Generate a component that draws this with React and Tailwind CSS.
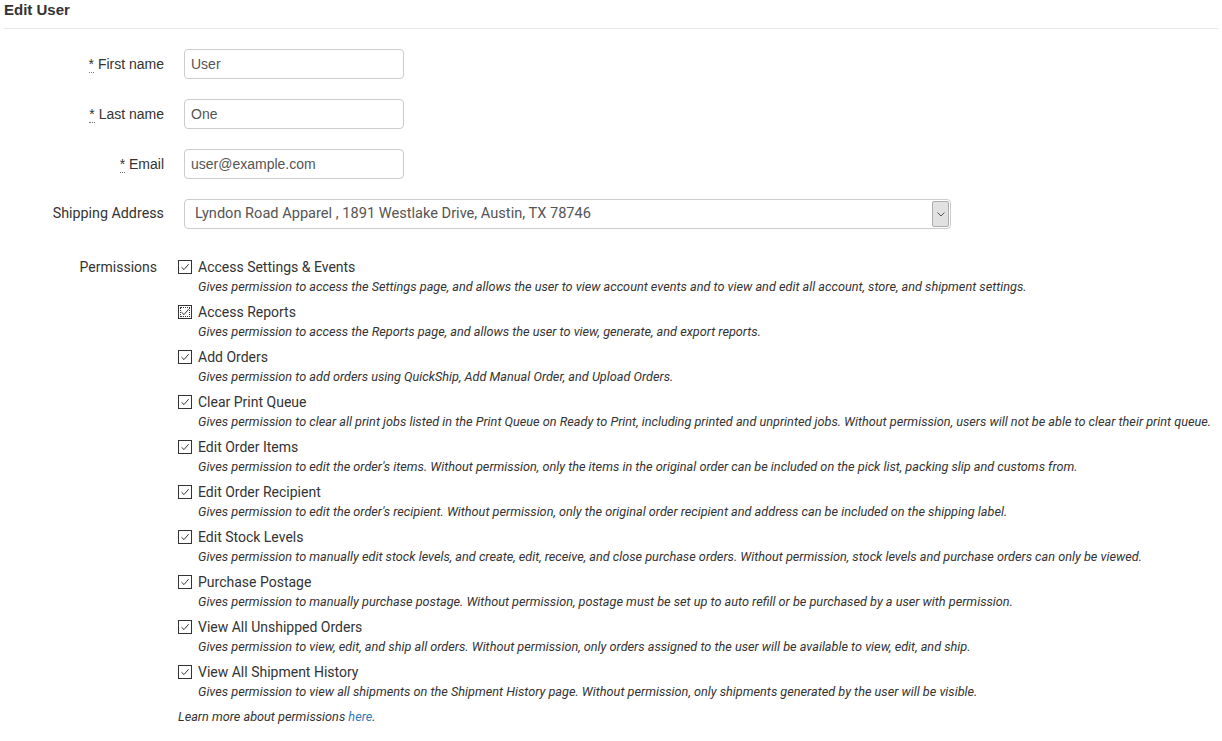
import React from 'react';

const permissions = [
  {
    name: 'Access Settings & Events',
    desc: 'Gives permission to access the Settings page, and allows the user to view account events and to view and edit all account, store, and shipment settings.',
  },
  {
    name: 'Access Reports',
    desc: 'Gives permission to access the Reports page, and allows the user to view, generate, and export reports.',
    focused: true,
  },
  {
    name: 'Add Orders',
    desc: 'Gives permission to add orders using QuickShip, Add Manual Order, and Upload Orders.',
  },
  {
    name: 'Clear Print Queue',
    desc: 'Gives permission to clear all print jobs listed in the Print Queue on Ready to Print, including printed and unprinted jobs. Without permission, users will not be able to clear their print queue.',
  },
  {
    name: 'Edit Order Items',
    desc: "Gives permission to edit the order's items. Without permission, only the items in the original order can be included on the pick list, packing slip and customs from.",
  },
  {
    name: 'Edit Order Recipient',
    desc: "Gives permission to edit the order's recipient. Without permission, only the original order recipient and address can be included on the shipping label.",
  },
  {
    name: 'Edit Stock Levels',
    desc: 'Gives permission to manually edit stock levels, and create, edit, receive, and close purchase orders. Without permission, stock levels and purchase orders can only be viewed.',
  },
  {
    name: 'Purchase Postage',
    desc: 'Gives permission to manually purchase postage. Without permission, postage must be set up to auto refill or be purchased by a user with permission.',
  },
  {
    name: 'View All Unshipped Orders',
    desc: 'Gives permission to view, edit, and ship all orders. Without permission, only orders assigned to the user will be available to view, edit, and ship.',
  },
  {
    name: 'View All Shipment History',
    desc: 'Gives permission to view all shipments on the Shipment History page. Without permission, only shipments generated by the user will be visible.',
  },
];

const arial = "font-['Liberation_Sans',Arial,sans-serif]";
const roboto = "font-['Roboto','Liberation_Sans',sans-serif]";

const TextRow = ({ label, value }) => (
  <div className="flex items-center mb-5">
    <label className={`w-[164px] text-right text-sm text-[#333] ${arial}`}>
      <abbr className="no-underline border-b border-dotted border-[#777] leading-[11px] cursor-help" title="required">*</abbr> {label}
    </label>
    <input
      type="text"
      defaultValue={value}
      className={`ml-5 w-[220px] h-[30px] px-[6px] border border-[#ccc] rounded-[4px] text-sm text-[#555] outline-none ${arial}`}
    />
  </div>
);

const CheckBox = ({ focused }) => (
  <span
    className={`flex items-center justify-center w-[14px] h-[14px] shrink-0 border border-[#333] bg-white ${
      focused ? 'outline outline-1 outline-dotted outline-[#333] outline-offset-[-3px]' : ''
    }`}
  >
    <svg width="10" height="10" viewBox="0 0 10 10" fill="none">
      <path d="M1.5 5.2 L4 7.6 L8.6 2.2" stroke="#333" strokeWidth="1" />
    </svg>
  </span>
);

export default function App() {
  return (
    <div className={`bg-white min-h-screen ${roboto} text-[#333]`}>
      <h2 className={`mx-1 text-[15px] font-bold leading-5 pb-2 border-b border-[#e8e8e8] ${arial}`}>Edit User</h2>

      <div className="pt-5">
        <TextRow label="First name" value="User" />
        <TextRow label="Last name" value="One" />
        <TextRow label="Email" value="user@example.com" />

        <div className="flex items-center">
          <label className="w-[164px] text-right text-[14.3px]">Shipping Address</label>
          <div className="ml-5 w-[767px] h-[30px] border border-[#ccc] rounded-[4px] flex items-center justify-between pl-[10px] pr-[1px]">
            <span className="text-[14.6px] text-[#555]">Lyndon Road Apparel , 1891 Westlake Drive, Austin, TX 78746</span>
            <span className="w-[17px] h-[26px] bg-[#e1e1e1] border border-[#adadad] rounded-[2px] flex items-center justify-center">
              <svg width="8" height="5" viewBox="0 0 8 5" fill="none">
                <path d="M0.5 0.5 L4 4 L7.5 0.5" stroke="#555" strokeWidth="1" />
              </svg>
            </span>
          </div>
        </div>

        <div className="flex mt-[28px]">
          <label className="w-[157px] text-right text-sm leading-5">Permissions</label>
          <div className="ml-[21px]">
            {permissions.map((p) => (
              <div key={p.name} className="mb-[5px]">
                <div className="flex items-center text-sm leading-5">
                  <CheckBox focused={p.focused} />
                  <span className="ml-[6px]">{p.name}</span>
                </div>
                <p className="pl-5 text-[12.7px] italic leading-5">{p.desc}</p>
              </div>
            ))}
            <p className="text-[12.7px] italic leading-5">
              Learn more about permissions <a href="#" className="text-[#337ab7]">here</a>.
            </p>
          </div>
        </div>
      </div>
    </div>
  );
}
